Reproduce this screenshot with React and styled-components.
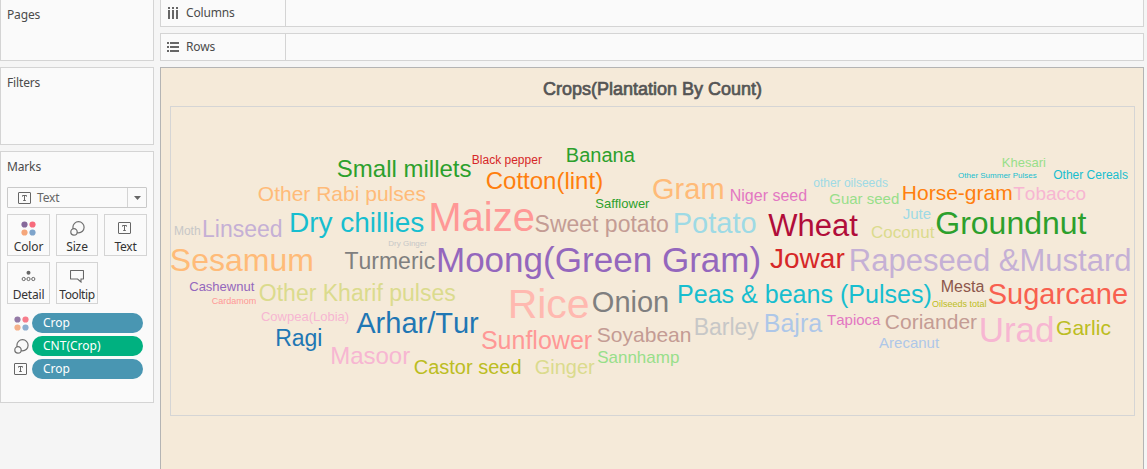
import React from 'react';
import styled, { createGlobalStyle } from 'styled-components';

const GlobalStyle = createGlobalStyle`
  * { box-sizing: border-box; }
  body {
    margin: 0;
    background: #f5f5f5;
    color: #4b4b4b;
    font: 12px/14px "Noto Sans", "Liberation Sans", sans-serif;
    letter-spacing: -0.15px;
    overflow: hidden;
  }
`;

const Workspace = styled.div`
  display: flex;
  gap: 6px;
  width: 1147px;
  height: 469px;
  overflow: hidden;
`;

const SideBar = styled.aside`
  width: 154px;
  display: flex;
  flex-direction: column;
  gap: 6px;
`;

const Card = styled.section`
  height: ${(p) => p.$height}px;
  flex: none;
  border: 1px solid #d4d4d4;
  border-top-width: ${(p) => (p.$cut ? 0 : 1)}px;
  background: #fafafa;
  padding: 8px 6px 0;
`;

const CardTitle = styled.h2`
  margin: 0;
  font-size: 12px;
  line-height: 14px;
  font-weight: 400;
`;

const MarkType = styled.div`
  display: flex;
  align-items: center;
  height: 21px;
  margin-top: 13px;
  border: 1px solid #c9c9c9;
  border-radius: 1px;
  color: #666;
`;

const MarkTypeLabel = styled.span`
  flex: 1;
  padding-left: 6px;
`;

const DropArrow = styled.span`
  width: 19px;
  height: 19px;
  border-left: 1px solid #d4d4d4;
  display: flex;
  align-items: center;
  justify-content: center;
`;

const ShelfGrid = styled.div`
  display: grid;
  grid-template-columns: 43px 42px 43px;
  grid-auto-rows: 42px;
  gap: 6px;
  margin-top: 6px;
`;

const MarkButton = styled.div`
  border: 1px solid #d4d4d4;
  display: flex;
  flex-direction: column;
  align-items: center;
  padding-top: 5px;
  color: #333;
  white-space: nowrap;
`;

const IconSlot = styled.span`
  height: 16px;
  display: flex;
  align-items: center;
  margin-right: ${(p) => p.$shift || 0}px;
`;

const ButtonLabel = styled.span`
  margin-top: 4px;
  letter-spacing: ${(p) => p.$spacing}px;
`;

const PillList = styled.div`
  display: flex;
  flex-direction: column;
  gap: 3px;
  margin-top: 9px;
`;

const PillRow = styled.div`
  display: flex;
  align-items: center;
  padding-left: 7px;
`;

const Pill = styled.span`
  width: 111px;
  height: 20px;
  flex: none;
  margin-left: 3px;
  border-radius: 10px;
  padding-left: 11px;
  line-height: 20px;
  letter-spacing: 0;
  color: #fff;
  background: ${(p) => p.$color};
`;

const Main = styled.main`
  width: 984px;
  display: flex;
  flex-direction: column;
  gap: 6px;
`;

const Shelf = styled.div`
  height: ${(p) => (p.$cut ? 27 : 28)}px;
  flex: none;
  display: flex;
  border: 1px solid #d4d4d4;
  border-top-width: ${(p) => (p.$cut ? 0 : 1)}px;
  background: #fafafa;
`;

const ShelfName = styled.div`
  width: 125px;
  display: flex;
  align-items: center;
  gap: 7px;
  padding-left: 6px;
  border-right: 1px solid #d4d4d4;
`;

const Sheet = styled.div`
  flex: none;
  height: 420px;
  border: 1px solid #b4b4b4;
  background: #f5ead9;
  padding: 0 8px 0 9px;
`;

const SheetTitle = styled.h1`
  margin: 0;
  height: 38px;
  padding-top: 11px;
  text-align: center;
  font: 400 18px/20px "Liberation Sans", Arial, sans-serif;
  letter-spacing: 0;
  -webkit-text-stroke: 0.7px #555;
  color: #555;
`;

const Cloud = styled.div`
  position: relative;
  height: 310px;
  border: 1px solid #d5d5d5;
  font-family: "Liberation Sans", Arial, sans-serif;
  font-kerning: none;
  font-variant-ligatures: none;
`;

const ascent = (size) => Math.round(size * 0.905);
const descent = (size) => Math.round(size * 0.212);

const Word = styled.span`
  position: absolute;
  left: ${(p) => p.$x - 170.75}px;
  top: ${(p) => p.$base - 107 - ascent(p.$size)}px;
  font-size: ${(p) => p.$size}px;
  line-height: ${(p) => ascent(p.$size) + descent(p.$size)}px;
  letter-spacing: 0;
  color: ${(p) => p.$color};
  white-space: nowrap;
`;

// text, x of the text origin, baseline y, font size, colour
const words = [
  ['Small millets', 336.6, 177, 24, '#2ca02c'],
  ['Black pepper', 471.6, 164, 12, '#d62728'],
  ['Banana', 565.6, 162, 20, '#2ca02c'],
  ['Cotton(lint)', 485.5, 189, 24, '#ff7f0e'],
  ['Other Rabi pulses', 257.6, 201, 21, '#ffbb78'],
  ['Gram', 651.8, 199, 29, '#ffbb78'],
  ['Niger seed', 729.5, 201, 16, '#e377c2'],
  ['Khesari', 1001.6, 167, 13, '#98df8a'],
  ['other oilseeds', 813, 187, 12, '#9edae5'],
  ['Other Summer Pulses', 957.8, 178, 8, '#17becf'],
  ['Other Cereals', 1053, 179, 12, '#17becf'],
  ['Guar seed', 829, 204, 15, '#98df8a'],
  ['Horse-gram', 901.6, 200, 21, '#ff7f0e'],
  ['Tobacco', 1013, 200, 19, '#f7b6d2'],
  ['Safflower', 595, 208, 13, '#2ca02c'],
  ['Sweet potato', 534.3, 232, 23, '#c49c94'],
  ['Potato', 672.5, 233, 29, '#9edae5'],
  ['Wheat', 768, 236, 31, '#b10d3a'],
  ['Jute', 902.4, 219, 15, '#9edae5'],
  ['Coconut', 870.8, 238, 17, '#dbdb8d'],
  ['Groundnut', 935, 234, 32, '#2ca02c'],
  ['Rapeseed &Mustard', 848.6, 271, 31, '#c5b0d5'],
  ['Jowar', 769.8, 268, 28, '#d62728'],
  ['Moong(Green Gram)', 435.7, 272, 35.05, '#9467bd'],
  ['Turmeric', 344.2, 269, 23, '#7f7f7f'],
  ['Maize', 428, 231, 40, '#ff9896'],
  ['Dry chillies', 288.7, 232, 28, '#17becf'],
  ['Dry Ginger', 388, 246, 8, '#c7c7c7'],
  ['Linseed', 201.8, 237, 23, '#c5b0d5'],
  ['Moth', 173.7, 235, 12, '#c7c7c7'],
  ['Sesamum', 169.6, 271, 32, '#ffbb78'],
  ['Cashewnut', 189, 291, 13, '#9467bd'],
  ['Cardamom', 211.5, 304, 9, '#ff9896'],
  ['Other Kharif pulses', 258.6, 301, 23, '#dbdb8d'],
  ['Cowpea(Lobia)', 260.7, 321, 13, '#f7b6d2'],
  ['Ragi', 274.9, 346, 23, '#1f77b4'],
  ['Arhar/Tur', 356, 333, 29, '#1f77b4'],
  ['Masoor', 329.9, 364, 24, '#f7b6d2'],
  ['Castor seed', 413.5, 374, 20, '#bcbd22'],
  ['Rice', 507.4, 318, 41, '#ffb9b0'],
  ['Onion', 591.6, 312, 29, '#7f7f7f'],
  ['Sunflower', 480.7, 349, 25, '#ff9896'],
  ['Soyabean', 596.6, 342, 21, '#c49c94'],
  ['Sannhamp', 596.9, 363, 17, '#98df8a'],
  ['Ginger', 534.5, 374, 20, '#dbdb8d'],
  ['Peas & beans (Pulses)', 676.8, 303, 25.05, '#17becf'],
  ['Barley', 693.4, 335, 23, '#c7c7c7'],
  ['Bajra', 763.5, 332, 25, '#aec7e8'],
  ['Tapioca', 826.8, 325, 15, '#e377c2'],
  ['Coriander', 884.6, 329, 21, '#c49c94'],
  ['Arecanut', 878.8, 348, 15, '#aec7e8'],
  ['Urad', 978.4, 342, 35, '#f7b6d2'],
  ['Garlic', 1055.8, 335, 21, '#bcbd22'],
  ['Mesta', 940.5, 292, 16, '#8c564b'],
  ['Sugarcane', 987.5, 304, 29, '#f8604f'],
  ['Oilseeds total', 931.8, 307, 9, '#bcbd22'],
];

const ColorIcon = ({ faded }) => (
  <svg width="15" height="15" viewBox="0 0 15 15" opacity={faded ? 0.88 : 1}>
    <circle cx="3.5" cy="3.5" r="3.1" fill="#86699b" />
    <circle cx="11.5" cy="3.5" r="3.1" fill="#f76b7c" />
    <circle cx="3.5" cy="11.5" r="3.1" fill="#f5a67b" />
    <circle cx="11.5" cy="11.5" r="3.1" fill="#7ea4cb" />
  </svg>
);

const SizeIcon = () => (
  <svg width="15" height="15" viewBox="0 0 15 15" fill="none" stroke="#707070" strokeWidth="1.2">
    <circle cx="8.5" cy="6.3" r="5.6" />
    <circle cx="4" cy="10.9" r="3.2" fill="#fafafa" />
  </svg>
);

const TextIcon = () => (
  <svg width="13" height="12" viewBox="0 0 13 12" fill="none" stroke="#666">
    <rect x="0.5" y="0.5" width="12" height="11" rx="0.4" />
    <path d="M4.5 4.6V3.5H8.5V4.6M6.5 3.5V8.5M5.2 8.5H7.8" />
  </svg>
);

const DetailIcon = () => (
  <svg width="15" height="12" viewBox="0 0 15 12" fill="none" stroke="#666">
    <circle cx="7.5" cy="2.8" r="2" fill="#666" stroke="none" />
    <circle cx="2.7" cy="9" r="1.6" />
    <circle cx="7.5" cy="9" r="1.6" />
    <circle cx="12.3" cy="9" r="1.6" />
  </svg>
);

const TooltipIcon = () => (
  <svg width="14" height="13" viewBox="0 0 14 13" fill="none" stroke="#666" strokeWidth="1.1">
    <path d="M1 0.5H13Q13.5 0.5 13.5 1V8.5Q13.5 9 13 9H11V12L7.6 9H1Q0.5 9 0.5 8.5V1Q0.5 0.5 1 0.5Z" />
  </svg>
);

const ColumnsIcon = () => (
  <svg width="12" height="12" viewBox="0 0 12 12" fill="#666" shapeRendering="crispEdges">
    {[1, 5, 9].map((x) => (
      <path key={x} d={`M${x} 0h2v2h-2zM${x} 3h2v9h-2z`} />
    ))}
  </svg>
);

const RowsIcon = () => (
  <svg width="12" height="10" viewBox="0 0 12 10" fill="#666" shapeRendering="crispEdges">
    {[0, 4, 8].map((y) => (
      <path key={y} d={`M0 ${y}h2v2h-2zM3 ${y}h9v2h-9z`} />
    ))}
  </svg>
);

const PillIcon = styled.span`
  width: 15px;
  height: 15px;
  flex: none;
  display: flex;
  align-items: center;
`;

const TypeIcon = styled.span`
  display: flex;
  padding-left: 10px;
`;

const buttons = [
  { label: 'Color', icon: <ColorIcon />, spacing: -0.1 },
  { label: 'Size', icon: <SizeIcon />, spacing: -0.1 },
  { label: 'Text', icon: <TextIcon />, spacing: -0.2, shift: 2 },
  { label: 'Detail', icon: <DetailIcon />, spacing: -0.2 },
  { label: 'Tooltip', icon: <TooltipIcon />, spacing: -0.4 },
];

const pills = [
  ['Crop', <ColorIcon faded />, '#4996b2'],
  ['CNT(Crop)', <SizeIcon />, '#00b180'],
  ['Crop', <TextIcon />, '#4996b2'],
];

export default function App() {
  return (
    <Workspace>
      <GlobalStyle />
      <SideBar>
        <Card $height={61} $cut>
          <CardTitle>Pages</CardTitle>
        </Card>
        <Card $height={78}>
          <CardTitle>Filters</CardTitle>
        </Card>
        <Card $height={252}>
          <CardTitle>Marks</CardTitle>
          <MarkType>
            <TypeIcon><TextIcon /></TypeIcon>
            <MarkTypeLabel>Text</MarkTypeLabel>
            <DropArrow>
              <svg width="7" height="4" viewBox="0 0 7 4"><path d="M0 0H7L3.5 4Z" fill="#666" /></svg>
            </DropArrow>
          </MarkType>
          <ShelfGrid>
            {buttons.map(({ label, icon, spacing, shift }) => (
              <MarkButton key={label}>
                <IconSlot $shift={shift}>{icon}</IconSlot>
                <ButtonLabel $spacing={spacing}>{label}</ButtonLabel>
              </MarkButton>
            ))}
          </ShelfGrid>
          <PillList>
            {pills.map(([label, icon, color], i) => (
              <PillRow key={i}>
                <PillIcon>{icon}</PillIcon>
                <Pill $color={color}>{label}</Pill>
              </PillRow>
            ))}
          </PillList>
        </Card>
      </SideBar>
      <Main>
        <Shelf $cut>
          <ShelfName><ColumnsIcon />Columns</ShelfName>
        </Shelf>
        <Shelf>
          <ShelfName><RowsIcon />Rows</ShelfName>
        </Shelf>
        <Sheet>
          <SheetTitle>Crops(Plantation By Count)</SheetTitle>
          <Cloud>
            {words.map(([text, x, base, size, color]) => (
              <Word key={text} $x={x} $base={base} $size={size} $color={color}>
                {text}
              </Word>
            ))}
          </Cloud>
        </Sheet>
      </Main>
    </Workspace>
  );
}
